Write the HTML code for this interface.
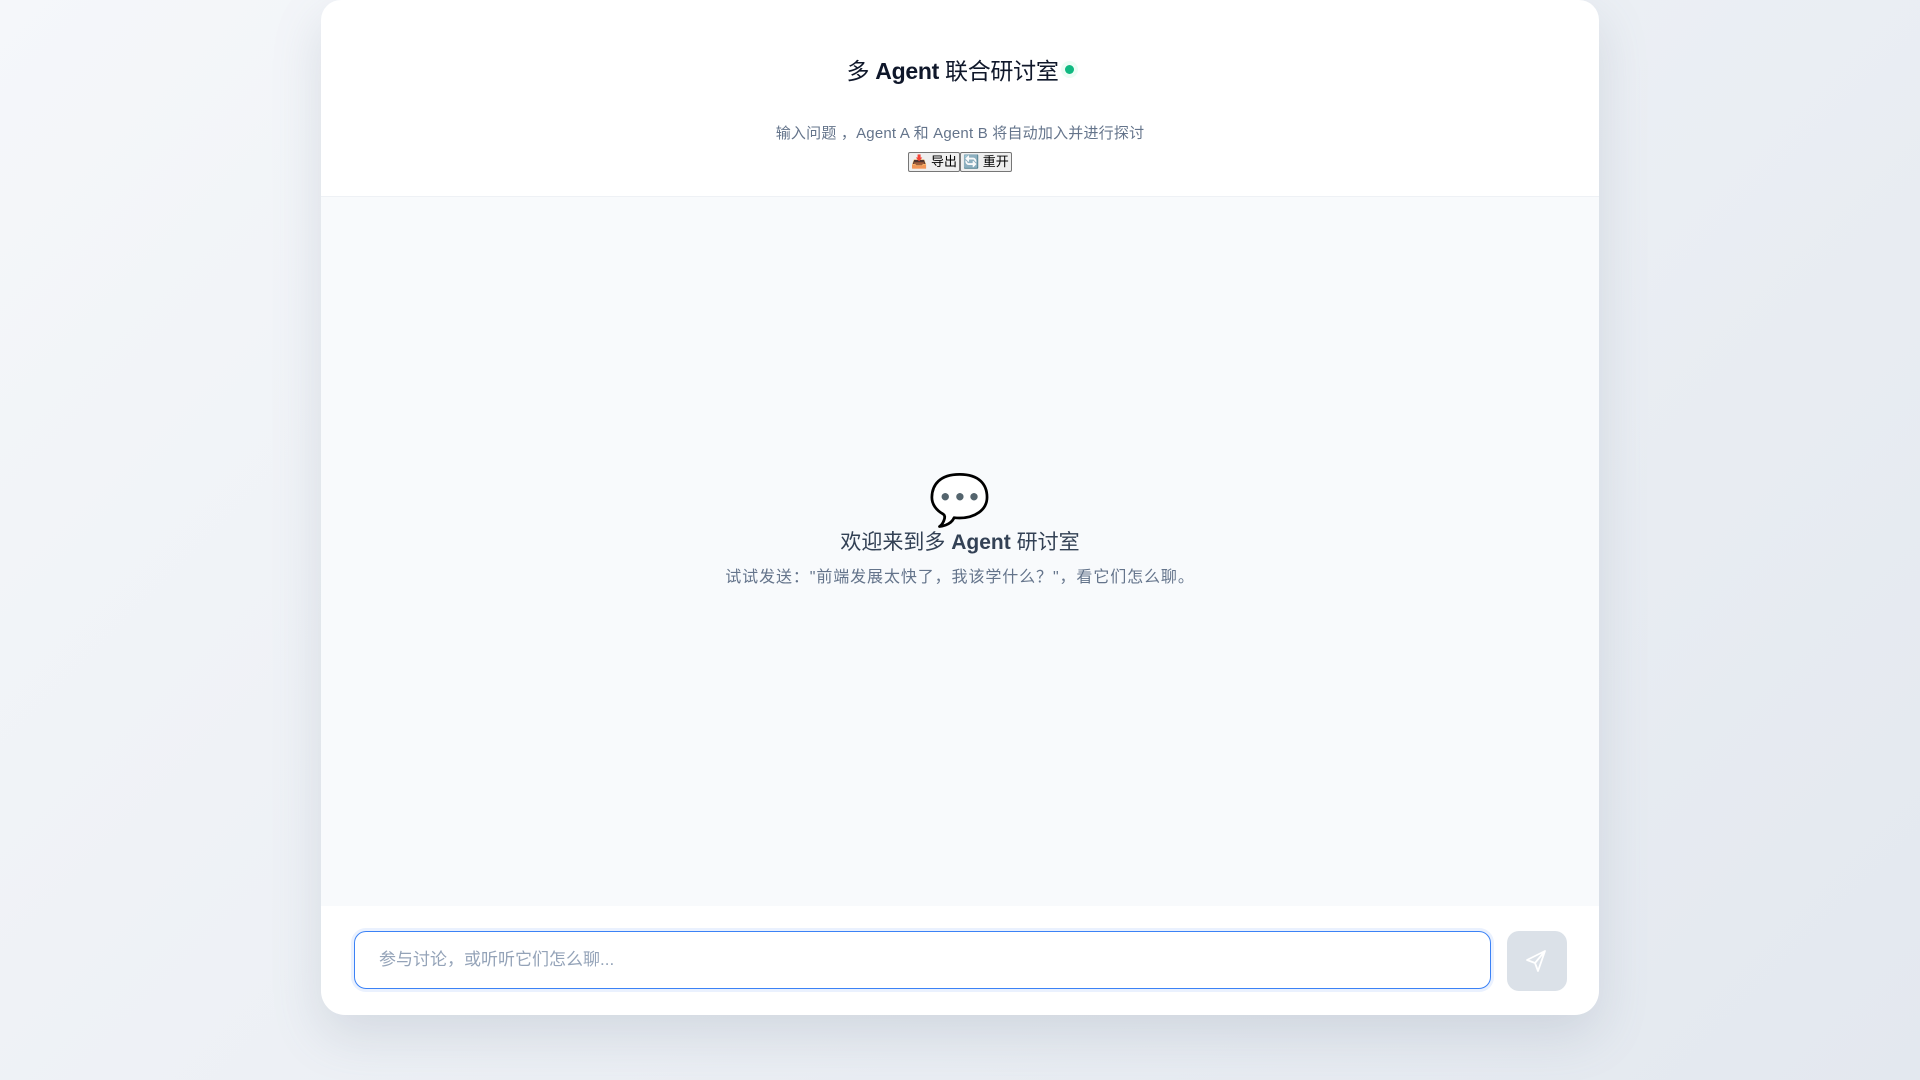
<!DOCTYPE html>
<html><head><meta charset="utf-8"><style>
*{box-sizing:border-box;margin:0;padding:0}
body{width:1920px;height:1080px;overflow:hidden;background:linear-gradient(135deg,#f5f7fa 0%,#e3e8ef 100%);font-family:"Liberation Sans","Noto Sans CJK SC",sans-serif;}
.card{position:absolute;left:321px;top:0;width:1278px;height:1015px;background:#fff;border-radius:20px 20px 24px 24px;box-shadow:0 20px 50px rgba(100,116,139,.18);overflow:hidden}
.head{height:197px;border-bottom:1px solid #eef1f5;text-align:center;position:relative}
.title{position:absolute;top:53px;left:0;right:0;font-size:23px;color:#0f172a;line-height:36px;letter-spacing:-0.3px}
.title b{font-weight:700}
.dot{display:inline-block;width:9px;height:9px;border-radius:50%;background:#10b981;box-shadow:0 0 0 4px #ecfdf5;vertical-align:middle;margin-left:6px;position:relative;top:-3px}
.sub{position:absolute;top:124px;left:0;right:0;font-size:15px;color:#64748b;line-height:20px;letter-spacing:0.2px}
.btns{position:absolute;top:152px;left:0;right:0;font-size:13px;line-height:18px}
.btns span{display:inline-block;border:1px solid #767676;background:#efefef;border-radius:2px;padding:0 2px;height:20px;color:#000}
.body{position:absolute;top:197px;left:0;right:0;height:709px;background:#f8fafc}
.emoji{position:absolute;top:470px;left:0;right:0;text-align:center;font-size:50px;line-height:60px;color:#334155}
.wt{position:absolute;top:526px;left:0;right:0;text-align:center;font-size:21px;color:#334155}
.ws{position:absolute;top:563px;left:0;right:0;text-align:center;font-size:16px;color:#64748b;letter-spacing:0.9px}
.input{position:absolute;left:33px;top:931px;width:1137px;height:58px;border:1.5px solid #3b82f6;border-radius:12px;box-shadow:0 0 0 3px #eaf1fe;font-size:17px;color:#94a3b8;padding-left:24px;line-height:55px}
.send{position:absolute;left:1186px;top:931px;width:60px;height:60px;border-radius:12px;background:#dbe1e8}
</style></head><body>
<div class="card">
<div class="head">
<div class="title">多 <b>Agent</b> 联合研讨室<span class="dot"></span></div>
<div class="sub">输入问题 ，Agent A 和 Agent B 将自动加入并进行探讨</div>
<div class="btns"><span>📥 导出</span><span>🔄 重开</span></div>
</div>
<div class="body"></div>
<div class="emoji">💬</div>
<div class="wt">欢迎来到多 <b>Agent</b> 研讨室</div>
<div class="ws">试试发送："前端发展太快了，我该学什么？"，看它们怎么聊。</div>
<div class="input">参与讨论，或听听它们怎么聊...</div>
<div class="send"><svg width="60" height="60" viewBox="0 0 60 60"><path d="M38 20 L20 29 L28 32 L31 40 Z M28 32 L38 20" fill="none" stroke="#fff" stroke-width="1.8" stroke-linejoin="round"/></svg></div>
</div>
</body></html>
